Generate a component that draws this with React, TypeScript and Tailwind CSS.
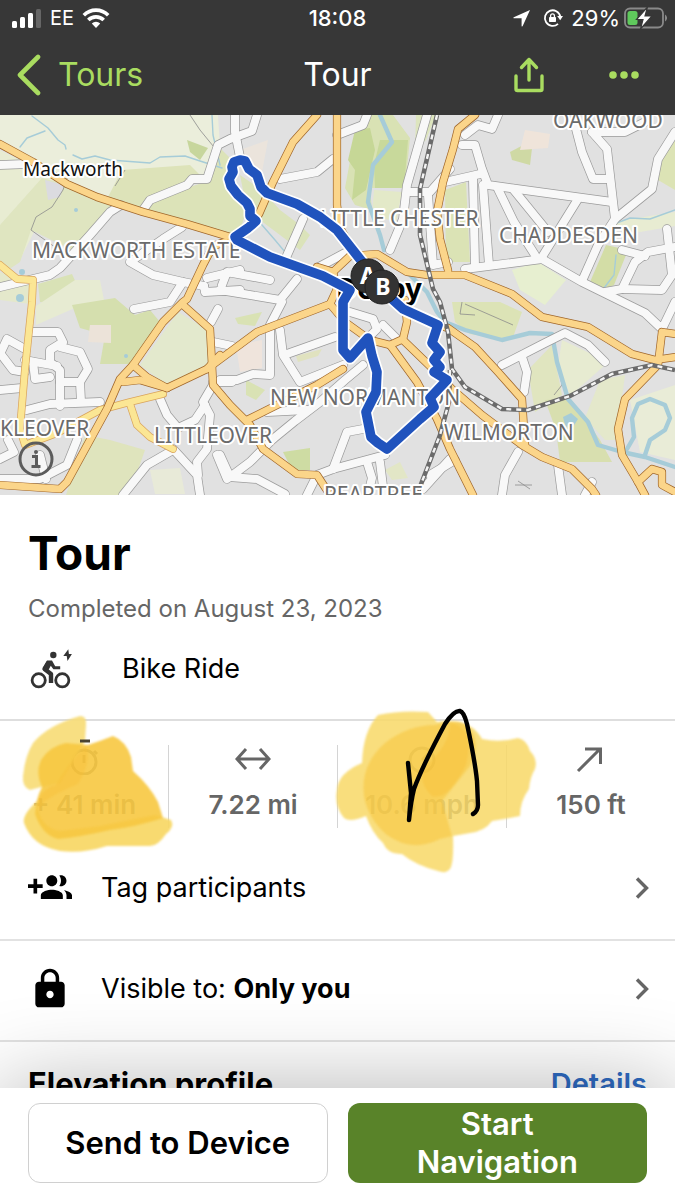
import type { ReactNode } from "react";

type Pt = string;

// Map geometry, all in the same user units as the map's viewBox
const FIELDS: { fill: string; points: Pt }[] = [
  { fill: "#ebeedb", points: "0,115 218,115 220,146 207,178 190,180 140,207 95,196 33,160 0,143" },
  { fill: "#e8ecd2", points: "0,150 30,165 66,184 50,200 20,260 0,270" },
  { fill: "#dfe5c0", points: "42,178 66,184 98,198 112,207 88,234 72,250 31,230 20,262 8,270 0,262 0,225" },
  { fill: "#dbdbe0", points: "45,180 64,185 60,197 48,200" },
  { fill: "#dde3b9", points: "122,170 190,165 205,180 190,185 148,200 140,208 108,197" },
  { fill: "#dce3b8", points: "218,146 232,160 230,185 248,206 240,230 225,235 145,209 152,201 190,187 208,181" },
  { fill: "#c7d69c", points: "187,140 208,148 200,160 190,152" },
  { fill: "#e4e8cb", points: "0,272 32,283 30,304 0,300" },
  { fill: "#d9e2b6", points: "38,284 72,274 82,296 60,304 40,302" },
  { fill: "#e7ebd2", points: "75,280 100,280 104,300 84,304 36,325 36,306" },
  { fill: "#d5dfae", points: "72,305 115,298 135,315 150,310 160,322 130,364 100,364 105,335 80,328" },
  { fill: "#ece3d9", points: "90,325 111,325 111,343 88,342" },
  { fill: "#e3e9cd", points: "140,365 178,312 208,330 210,365 168,386" },
  { fill: "#dfe4bd", points: "85,435 110,440 145,450 138,470 120,495 66,495" },
  { fill: "#e8ead8", points: "150,470 180,468 185,494 155,494" },
  { fill: "#d9e2b4", points: "362,115 393,115 410,138 405,188 370,188 372,210 355,205 345,188 352,150" },
  { fill: "#c6d796", points: "355,130 370,128 375,150 366,190 352,200 355,170 348,160" },
  { fill: "#c8d99b", points: "380,140 408,140 404,188 375,188 374,165" },
  { fill: "#e3e9c8", points: "374,190 402,192 396,222 372,215" },
  { fill: "#dde5be", points: "416,115 436,115 426,140 415,150" },
  { fill: "#dbe3ba", points: "240,175 262,190 280,210 300,225 310,235 300,250 260,220 245,200" },
  { fill: "#dbe3b5", points: "445,190 466,182 470,262 446,262" },
  { fill: "#cfd9a4", points: "510,152 533,140 530,165 512,160" },
  { fill: "#efe4da", points: "525,130 550,134 548,148 520,150" },
  { fill: "#e7efd0", points: "512,270 538,262 566,280 545,305 520,290" },
  { fill: "#d3dda6", points: "606,245 628,250 614,285 602,290 590,282" },
  { fill: "#e8ecd2", points: "612,222 675,212 675,226 640,232 618,228" },
  { fill: "#dce3b5", points: "675,140 675,190 658,180 662,160" },
  { fill: "#dce3b6", points: "452,302 500,302 522,312 512,340 470,334 455,322" },
  { fill: "#e7ebd1", points: "562,340 600,358 604,366 570,396 558,365" },
  { fill: "#e0e5bf", points: "528,370 552,345 562,395 535,412" },
  { fill: "#d8dfaf", points: "545,400 570,398 600,440 612,462 560,462 556,430" },
  { fill: "#e4e8cb", points: "600,380 625,375 622,398 616,440 605,440 585,418" },
  { fill: "#e9ecd7", points: "630,400 675,385 675,460 640,452" },
  { fill: "#d9e2b4", points: "246,380 265,390 256,400 246,395" },
  { fill: "#cedca3", points: "283,452 310,448 310,470 292,470" },
  { fill: "#e0e2bf", points: "296,356 322,349 318,356 298,362" },
  { fill: "#d9e2b4", points: "235,318 262,312 255,326 238,324" },
  { fill: "#efe4dc", points: "236,345 262,340 262,368 240,372" },
  { fill: "#e2e6c6", points: "385,470 400,462 408,478 392,480" },
  { fill: "#ebe4dc", points: "240,150 268,140 262,172 248,176" },
];

const WHITE_ROADS: Pt[] = [
  "0,165 26,164",
  "0,287 50,275 60,268 90,235 110,212 121,205",
  "143,210 150,200 187,185 192,179 207,179 218,145 230,139 252,131 257,115",
  "182,227 163,239 130,262 153,275 183,282 204,286",
  "183,282 170,302 134,309",
  "204,286 205,292 240,290",
  "207,278 240,270",
  "235,115 235,132 240,157",
  "280,179 317,172 333,159",
  "337,135 363,125 367,115",
  "427,115 407,185 403,219 390,250",
  "410,192 430,192 450,169",
  "428,195 433,265 448,262",
  "303,219 285,260",
  "345,253 317,268",
  "222,285 227,272 270,280",
  "220,290 280,300 297,279",
  "282,302 270,325 270,375 253,374 237,380 220,380",
  "280,330 283,355 300,382 343,365",
  "287,354 335,337",
  "273,439 295,421 320,402 345,380 363,365",
  "267,412 307,410",
  "350,312 373,319 377,329 366,340",
  "383,325 397,339",
  "363,429 347,432 333,469",
  "307,495 317,475 333,469 385,455",
  "367,462 372,478 368,495",
  "380,462 384,495",
  "220,455 230,477 250,462 273,439",
  "230,477 257,479 285,494",
  "450,459 423,489",
  "0,354 7,339 25,349",
  "0,353 13,370 25,372",
  "33,332 58,332 63,342 50,350 50,362 60,370 60,406",
  "60,347 80,352 88,369 80,382 81,402",
  "33,362 35,379 50,377",
  "60,382 80,382",
  "25,360 35,362 57,366",
  "27,410 50,404 100,402",
  "0,390 22,388",
  "218,309 211,322",
  "0,479 40,479 67,465 77,440",
  "0,459 14,452 8,440",
  "40,455 46,479",
  "123,495 147,465 173,450",
  "160,399 167,415 178,428 195,420 205,405",
  "173,449 197,475 200,495",
  "213,385 203,402 210,415 207,449 197,462 198,475",
  "217,455 227,479",
  "213,342 232,346",
  "213,382 232,382",
  "462,145 475,145 482,169 488,185 612,202",
  "473,179 475,266",
  "483,185 489,265",
  "445,182 480,174",
  "465,135 478,125 492,129 498,115",
  "465,269 542,259 582,282 645,313 662,329 675,302",
  "498,189 514,222 535,255",
  "513,189 548,232",
  "578,199 542,257",
  "592,132 607,149 615,219 598,245 582,281",
  "575,125 582,152 593,179 608,179",
  "675,132 658,159 652,189 615,219",
  "605,292 622,289 635,262 648,252 675,247",
  "622,250 645,256",
  "667,229 672,275 662,290 622,289",
  "592,132 625,132 645,122",
  "502,365 545,343 565,333 588,345 605,362",
  "522,357 527,372 524,392",
  "518,452 505,475 502,495",
  "558,465 562,495",
  "585,495 592,482",
  "430,475 455,460",
];

const YELLOW_ROADS: Pt[] = [
  "0,265 17,279 33,280 32,302 25,369 20,429 25,445 57,433 100,410 130,402 163,394",
  "130,404 137,425 150,437 173,449",
];

const ORANGE_ROADS: Pt[] = [
  "0,144 33,162 67,184 97,197 143,212 187,224 240,240 270,257",
  "225,242 213,246 203,265 187,299 183,302 163,322 133,365 120,379 107,409 67,482 60,489 0,485",
  "183,305 210,329 212,365 213,385 230,405 250,425 263,449 297,474 317,475 330,495",
  "133,365 147,377 167,388 207,369 257,332 330,304",
  "123,382 140,380 167,388",
  "207,369 220,355",
  "317,115 293,142 273,182 259,214",
  "337,115 337,205 340,228 355,253",
  "475,115 458,129 453,149 443,182 437,212 440,239 448,270",
  "317,267 333,272 350,256 377,254 407,272 427,275 465,275 512,294 542,317 588,327 632,354 655,360 675,357",
  "333,272 337,289 330,304 345,322 370,340 390,345 403,339 407,322 405,300",
  "390,345 417,382 437,419 450,449 473,495",
  "403,340 433,369 452,389 482,415 522,445 542,457 572,469 592,489 596,495",
  "343,369 317,385 247,420",
  "438,325 448,328 475,347 498,372 522,399 525,445",
  "675,334 662,332 658,365 625,399 618,429 622,455 638,482 645,495",
  "638,482 652,469 662,472 662,485 675,492",
];

const RIVERS: Pt[] = [
  "380,115 392,142 373,165 368,202 380,235 384,250",
  "405,270 427,292 437,312 445,322 465,330 502,340 530,333 552,334 557,362 568,399 588,422 598,445 622,452 645,457 675,467",
  "627,449 634,437 632,418 638,404 650,399 665,405 670,418 665,430 650,440 645,455",
];

const STREAMS: Pt[] = [
  "32,116 48,128 58,140 65,145 66,149",
  "20,147 27,138 45,131",
  "73,155 82,159 95,156 110,160 150,163 160,157 185,156 200,161 222,168",
  "212,115 213,135 220,165",
  "250,205 262,225 275,240 290,258 312,268",
  "614,224 630,218 650,219 675,210",
  "616,255 614,275 604,288",
];

const RAILWAYS: Pt[] = [
  "437,115 420,189 420,235 433,289 440,302 448,332 452,369 465,387 502,409 528,410 570,396 612,374 652,365 675,370",
  "450,370 449,402 440,435 418,492",
];

const PATHS: Pt[] = [
  "67,178 63,190 52,207 36,217 31,230 59,250",
  "190,115 200,130 218,152",
  "125,170 115,186",
  "558,365 562,385 554,395",
  "462,302 460,314 475,315",
  "465,304 513,325",
  "515,485 532,485",
  "518,481 530,489",
];

const ROUTE =
  "367,268 352,249 337,230 320,217 297,204 267,193 261,187 257,175 249,169 245,161 240,160 234,162 232,167 233,172 229,179 231,186 238,195 247,203 250,209 250,216 256,221 248,228 235,237 237,240 270,257 323,276 350,290 343,302 343,350 350,358 368,338 372,356 377,372 376,392 366,412 371,437 378,443 387,449 420,419 434,407 430,398 447,380 434,372 440,367 434,360 440,352 432,343 438,325 403,309 382,290";

const LABELS = [
  { text: "MACKWORTH ESTATE", x: 32, y: 258 },
  { text: "LITTLE CHESTER", x: 320, y: 226 },
  { text: "CHADDESDEN", x: 499, y: 243 },
  { text: "OAKWOOD", x: 553, y: 128 },
  { text: "NEW NORMANTON", x: 270, y: 405 },
  { text: "KLEOVER", x: 0, y: 436 },
  { text: "LITTLEOVER", x: 154, y: 443 },
  { text: "WILMORTON", x: 444, y: 440 },
  { text: "PEARTREE", x: 324, y: 502 },
];

function Roads({ lines, edge, fill, width }: { lines: Pt[]; edge: string; fill: string; width: number }) {
  return (
    <g fill="none" strokeLinejoin="round" strokeLinecap="round">
      {lines.map((p, i) => (
        <polyline key={`e${i}`} points={p} stroke={edge} strokeWidth={width + 1.4} />
      ))}
      {lines.map((p, i) => (
        <polyline key={`f${i}`} points={p} stroke={fill} strokeWidth={width} />
      ))}
    </g>
  );
}

function RouteMap() {
  return (
    <svg
      viewBox="0 115 675 380"
      className="block aspect-[675/380] w-full shrink-0 font-['Noto_Sans','Open_Sans',sans-serif]"
      role="img"
      aria-label="Map of the tour route around Derby"
    >
      <rect x="0" y="115" width="675" height="380" fill="#e1e1e1" />
      {FIELDS.map((f, i) => (
        <polygon key={i} points={f.points} fill={f.fill} />
      ))}
      <g fill="none" stroke="#8c8c8c" strokeWidth="0.8">
        {PATHS.map((p, i) => (
          <polyline key={i} points={p} />
        ))}
      </g>
      <g fill="none" stroke="#a6ccd8" strokeLinejoin="round" strokeLinecap="round">
        {STREAMS.map((p, i) => (
          <polyline key={i} points={p} strokeWidth="1.4" />
        ))}
        {RIVERS.map((p, i) => (
          <polyline key={i} points={p} strokeWidth="4.4" />
        ))}
      </g>
      <g fill="#a6ccd8">
        <circle cx="76" cy="210" r="2" />
        <circle cx="20" cy="298" r="4" />
        <circle cx="22" cy="272" r="3" />
        <circle cx="126" cy="356" r="2" />
        <path d="M563 417 l8 -4 l7 6 l-5 8 l-5 -4 l-2 6z" />
      </g>
      <Roads lines={WHITE_ROADS} edge="#9b9b9b" fill="#f8f8f8" width={8} />
      <Roads lines={YELLOW_ROADS} edge="#d9a35c" fill="#fbe694" width={6.4} />
      <Roads lines={ORANGE_ROADS} edge="#a0662a" fill="#fbd58a" width={6.8} />
      <g fill="none">
        {RAILWAYS.map((p, i) => (
          <g key={i}>
            <polyline points={p} stroke="#6b6b6b" strokeWidth="4.600" />
            <polyline points={p} stroke="#f4f4f4" strokeWidth="2.400" strokeDasharray="5 5" />
          </g>
        ))}
      </g>

      <g stroke="#fff" strokeWidth="4" strokeLinejoin="round" paintOrder="stroke">
        <g fill="#6b6b6b" fontSize="21">
          {LABELS.map((l) => (
            <text key={l.text} x={l.x} y={l.y}>
              {l.text}
            </text>
          ))}
        </g>
        <text x="23" y="176" fill="#111" fontSize="19">
          Mackworth
        </text>
        <text x="336" y="299" fill="#000" fontSize="29" fontWeight="700">
          Derby
        </text>
      </g>

      <g fill="none" strokeLinejoin="round" strokeLinecap="round">
        <polyline points={ROUTE} stroke="#fff" strokeWidth="13" />
        <polyline points={ROUTE} stroke="#2053bd" strokeWidth="9.600" />
      </g>
      <g fontSize="23" fontWeight="700" textAnchor="middle">
        <circle cx="368" cy="276" r="17" fill="#333" stroke="#222" />
        <text x="368" y="284" fill="#fff">
          A
        </text>
        <circle cx="382" cy="287" r="17" fill="#333" stroke="#222" />
        <text x="383" y="295" fill="#fff">
          B
        </text>
      </g>

      <g fill="none" stroke="#5c5c5c" strokeWidth="3">
        <circle cx="36" cy="459" r="16" />
        <path d="M32 456.500h4.500v9.500M31.500 466.500h9" />
      </g>
      <circle cx="36" cy="452" r="2" fill="#5c5c5c" />
    </svg>
  );
}

function StatusBar() {
  return (
    <div className="grid h-9 grid-cols-3 items-center px-3 text-[22px] leading-9">
      <div className="flex items-center gap-2">
        <svg viewBox="0 0 30 20" className="h-5 w-[30px]" fill="#fff" aria-hidden="true">
          <rect x="0" y="13" width="5" height="7" rx="1.500" />
          <rect x="8" y="9" width="5" height="11" rx="1.500" />
          <rect x="16" y="5" width="5" height="15" rx="1.500" />
          <rect x="24" y="1" width="5" height="19" rx="1.500" fill="#666" />
        </svg>
        <span className="text-xl leading-9">EE</span>
        <svg viewBox="0 0 28 20" className="h-5 w-7" fill="none" stroke="#fff" strokeWidth="3.600" aria-hidden="true">
          <path d="M1.800 7.200a17.300 17.300 0 0 1 24.400 0" />
          <path d="M6.300 12a11 11 0 0 1 15.400 0" />
          <path d="M14 20l-4.200-4.600a6.200 6.200 0 0 1 8.400 0z" fill="#fff" stroke="none" />
        </svg>
      </div>
      <div className="text-center font-medium">18:08</div>
      <div className="flex items-center justify-end gap-1">
        <svg viewBox="0 0 18 18" className="mr-2 size-[18px] shrink-0" fill="#fff" aria-hidden="true">
          <path d="M17 1L.8 8.300c-.6.300-.5 1 .2 1H8.600v7.600c0 .8.800.9 1.100.2z" />
        </svg>
        <svg viewBox="0 0 20 20" className="mr-1 size-5 shrink-0" fill="none" stroke="#fff" strokeWidth="1.800" aria-hidden="true">
          <path d="M17.300 8.500A7.800 7.800 0 1 0 15 15.800" />
          <path d="M14.200 8h5.800l-2.800 4.300z" fill="#fff" stroke="none" />
          <rect x="6" y="9" width="7" height="5" rx="0.800" fill="#fff" stroke="none" />
          <path d="M7.600 9.500V7.800a1.900 1.900 0 0 1 3.800 0v1.700" strokeWidth="1.300" />
        </svg>
        <span>29%</span>
        <svg viewBox="0 0 43 22" className="-mr-1 h-[22px] w-[43px] shrink-0" aria-hidden="true">
          <rect x="1" y="1.500" width="38" height="19" rx="5" fill="none" stroke="#8a8a8a" strokeWidth="1.800" />
          <path d="M41 7.500a4 4 0 0 1 0 7z" fill="#8a8a8a" />
          <rect x="3.500" y="4" width="10" height="14" rx="2.500" fill="#5fc95c" />
          <path d="M23.500 0L12.500 12.500h6.500L16.500 22 28 9h-7z" fill="#fff" stroke="#373737" strokeWidth="1.200" />
        </svg>
      </div>
    </div>
  );
}

function NavBar() {
  return (
    <nav className="grid grid-cols-[1fr_auto_1fr] items-center px-4 pt-1 pb-[5px] text-[32px] leading-[70px]">
      <a href="#tours" className="flex items-center gap-4 text-[#a9dc60]">
        <svg viewBox="0 0 26 42" className="h-[42px] w-[26px]" fill="none" stroke="currentColor" strokeWidth="4.600" strokeLinecap="round" strokeLinejoin="round" aria-hidden="true">
          <path d="M22 3L4 21l18 18" />
        </svg>
        Tours
      </a>
      <h1>Tour</h1>
      <div className="flex items-center justify-end gap-16 pr-5 text-[#a9dc60]">
        <button type="button" aria-label="Share">
          <svg viewBox="0 0 32 36" className="h-9 w-8" fill="none" stroke="currentColor" strokeWidth="3.400" strokeLinecap="round" strokeLinejoin="round" aria-hidden="true">
            <path d="M3 19v13a1.500 1.500 0 0 0 1.500 1.500h23a1.500 1.500 0 0 0 1.500-1.500V19" />
            <path d="M16 23V2.500M8.500 10.500l7.500-8 7.500 8" />
          </svg>
        </button>
        <button type="button" aria-label="More options">
          <svg viewBox="0 0 30 8" className="h-2 w-[30px]" fill="currentColor" aria-hidden="true">
            <circle cx="4" cy="4" r="3.800" />
            <circle cx="15" cy="4" r="3.800" />
            <circle cx="26" cy="4" r="3.800" />
          </svg>
        </button>
      </div>
    </nav>
  );
}

function Stat({ icon, value }: { icon: ReactNode; value: string }) {
  return (
    <div className="flex h-[83px] flex-1 flex-col items-center gap-3 border-l border-[#d4d4d4] first:border-l-0">
      <svg viewBox="0 0 36 30" className="h-[30px] w-9" fill="none" stroke="#666" strokeWidth="3" aria-hidden="true">
        {icon}
      </svg>
      <span className="text-[26px] leading-9 font-semibold text-[#666]">{value}</span>
    </div>
  );
}

function Highlighter() {
  return (
    <svg viewBox="0 700 675 180" className="pointer-events-none absolute inset-x-0 -top-5 w-full" aria-hidden="true">
      <g className="blur-[1px]">
        <path
          d="M80 715Q87 715 86 724L85 740 60 782Q40 786 30 789 22 786 23 775 25 755 33 742 48 724 80 715z"
          fill="#f8dd78"
          opacity="0.930"
        />
        <path
          d="M37 800Q22 814 24 822 32 845 60 850 82 853 107 845L150 845Q158 845 166 833 175 826 171 819L155 814 100 825 60 830Q38 826 37 800z"
          fill="#f8d765"
          opacity="0.930"
        />
        <path
          d="M113 735Q126 740 131 756L133 770Q150 785 158 801L163 817Q135 826 110 829 80 836 58 838 42 834 35 813 36 797 42 786 35 772 41 759 50 745 66 742L88 744Q100 740 113 735z"
          fill="#f7c842"
          opacity="0.910"
        />
        <path d="M86 745Q92 760 78 783 60 790 45 800 38 812 37 800 45 786 56 784 66 765 86 745z" fill="#f7be35" opacity="0.400" />
        <path
          d="M378 714Q400 709 428 711L437 721Q470 716 482 738 500 742 518 737 527 739 530 750 538 758 535 768 530 776 529 788 520 800 520 815 505 818 492 820 485 830 470 832L453 835Q454 862 450 868 446 873 438 870 415 864 402 853 388 854 383 842 372 832 366 815 350 822 344 817 334 805 337 789 338 772 362 762 363 730 378 714z"
          fill="#f8d868"
          opacity="0.860"
        />
        <path
          d="M435 724Q462 716 468 726 482 740 470 765L442 800 452 835 440 838Q412 852 387 834 368 818 364 795 360 764 385 742 408 724 435 724z"
          fill="#f7c53c"
          opacity="0.550"
        />
        <path d="M450 722Q476 726 466 764 448 800 432 795 418 782 424 766 450 745 450 722z" fill="#f7be35" opacity="0.400" />
      </g>
      <path d="M80 740h10" stroke="#4a4433" strokeWidth="3" />
      <path
        d="M408 762L411 792 409 819Q411 800 414 788 422 766 445 723 454 709 460 710 464 711 467 723 475 760 477 780L478 804Q478 810 473 813"
        fill="none"
        stroke="#000"
        strokeWidth="4.400"
        strokeLinecap="round"
        strokeLinejoin="round"
      />
    </svg>
  );
}

function Row({ icon, children }: { icon: string; children: ReactNode }) {
  return (
    <button type="button" className="flex h-[101px] w-full items-center border-b-2 border-[#e2e2e2] pr-6 pb-1 pl-7 text-left text-[27px] leading-9">
      <svg viewBox="0 0 24 24" className="mr-[29px] size-11" aria-hidden="true">
        <path d={icon} />
      </svg>
      <span className="flex-1">{children}</span>
      <svg viewBox="0 0 18 24" className="h-6 w-[18px]" fill="none" stroke="#666" strokeWidth="3.400" aria-hidden="true">
        <path d="M4 2.500l9.500 9.500L4 21.500" />
      </svg>
    </button>
  );
}

const GROUP_ADD =
  "M8 10H5V7H3v3H0v2h3v3h2v-3h3v-2zm10 1c1.660 0 2.990-1.340 2.990-3S19.660 5 18 5c-.32 0-.63.05-.91.14.57.81.9 1.790.9 2.860s-.34 2.040-.9 2.860c.28.09.59.14.91.14zm-5 0c1.660 0 2.990-1.340 2.990-3S14.660 5 13 5c-1.660 0-3 1.340-3 3s1.340 3 3 3zm6.620 2.160c.83.73 1.380 1.660 1.380 2.840v2h3v-2c0-1.540-2.370-2.490-4.380-2.840zM13 13c-2 0-6 1-6 3v2h12v-2c0-2-4-3-6-3z";
const LOCK =
  "M18 8h-1V6c0-2.760-2.240-5-5-5S7 3.240 7 6v2H6c-1.100 0-2 .9-2 2v10c0 1.100.9 2 2 2h12c1.100 0 2-.9 2-2V10c0-1.100-.9-2-2-2zm-6 9c-1.100 0-2-.9-2-2s.9-2 2-2 2 .9 2 2-.9 2-2 2zm3.100-9H8.900V6c0-1.710 1.390-3.100 3.100-3.100 1.710 0 3.100 1.390 3.100 3.100v2z";

export default function App() {
  return (
    <div className="flex h-screen flex-col overflow-hidden bg-white font-[Inter,'Liberation_Sans',sans-serif] text-black">
      <header className="shrink-0 bg-[#373737] text-white">
        <StatusBar />
        <NavBar />
      </header>

      <main className="min-h-0 flex-1 overflow-hidden">
        <RouteMap />

        <section className="border-b-2 border-[#dedede] px-7 pt-7 pb-7">
          <h2 className="text-[46px] leading-[60px] font-bold">Tour</h2>
          <p className="mt-2 text-2xl leading-9 text-[#666]">Completed on August 23, 2023</p>
          <div className="mt-5 flex items-center gap-12">
            <svg viewBox="0 0 46 44" className="h-11 w-[46px]" fill="none" stroke="#333" aria-hidden="true">
              <circle cx="10.700" cy="33.300" r="6.600" strokeWidth="2.800" />
              <circle cx="34.300" cy="33.300" r="6.600" strokeWidth="2.800" />
              <circle cx="25.300" cy="8" r="3.200" fill="#333" stroke="none" />
              <path d="M20.500 15.500L16.500 22l6.500 5V36" strokeWidth="4.400" strokeLinejoin="round" />
              <path d="M19 13.500h5l3.200 5.800h5v3h-6.800l-2.600-3.600-2.300 4.300-5-3z" fill="#333" stroke="none" />
              <path d="M40.300 2.300L35.300 9h3.400l.8 5 4.400-7h-3z" fill="#333" stroke="none" />
            </svg>
            <span className="text-[27px] leading-9">Bike Ride</span>
          </div>
        </section>

        <section className="relative flex pt-6 pb-3">
          <Stat
            value="+ 41 min"
            icon={
              <>
                <circle cx="18" cy="17" r="12" />
                <path d="M18 10v8M28 6l3 3" />
              </>
            }
          />
          <Stat value="7.22 mi" icon={<path d="M2 14h32M11 4L2 14l9 10M25 4l9 10-9 10" />} />
          <Stat
            value="10.6 mph"
            icon={
              <>
                <circle cx="18" cy="15" r="12" />
                <path d="M18 15l6-6" />
              </>
            }
          />
          <Stat value="150 ft" icon={<path d="M5 26L27 4M12 4h15.500v15" />} />
          <Highlighter />
        </section>

        <Row icon={GROUP_ADD}>Tag participants</Row>
        <Row icon={LOCK}>
          Visible to: <b>Only you</b>
        </Row>

        <section className="flex items-center justify-between px-7 pt-6 leading-9">
          <h3 className="text-[31px] font-bold">Elevation profile</h3>
          <a href="#elevation" className="text-[29px] font-semibold text-[#2f6cc4]">
            Details
          </a>
        </section>
      </main>

      <footer className="relative z-10 grid shrink-0 grid-cols-2 gap-5 bg-white px-7 pt-[15px] pb-[17px] shadow-[0_0_90px_rgba(0,0,0,0.3)]">
        <button type="button" className="h-20 rounded-xl border border-[#d0d0d0] text-[31px] font-semibold">
          Send to Device
        </button>
        <button type="button" className="h-20 rounded-xl bg-[#598329] px-12 text-[31px] leading-[38px] font-semibold text-white">
          Start Navigation
        </button>
      </footer>
    </div>
  );
}
